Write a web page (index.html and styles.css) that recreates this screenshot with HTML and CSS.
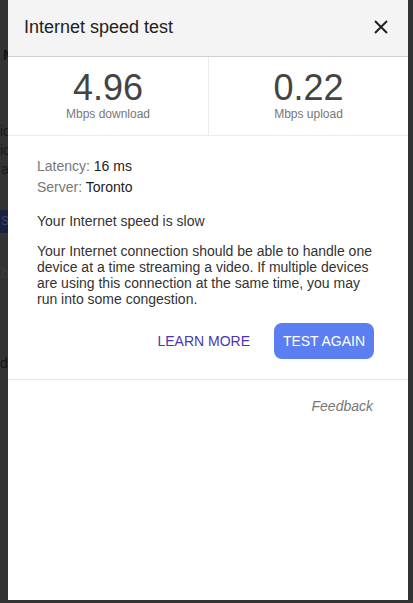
FILE: index.html
```html
<!DOCTYPE html>
<html lang="en">
<head>
<meta charset="utf-8">
<title>Internet speed test</title>
<link rel="stylesheet" href="styles.css">
</head>
<body>
<div class="page">
  <div class="pg-line pg-m">M</div>
  <div class="pg-line pg-ic1">ic</div>
  <div class="pg-line pg-ic2">ic</div>
  <div class="pg-line pg-a">a</div>
  <div class="pg-btn">S</div>
  <div class="pg-line pg-b">b</div>
  <div class="pg-line pg-d">d</div>
</div>

<div class="dialog" role="dialog" aria-label="Internet speed test">
  <header class="dlg-head">
    <h1 class="dlg-title">Internet speed test</h1>
    <button class="close" aria-label="Close">
      <svg width="14" height="14" viewBox="0 0 14 14"><path d="M1 1L13 13M13 1L1 13" stroke="#222" stroke-width="2" fill="none"/></svg>
    </button>
  </header>

  <section class="stats">
    <div class="stat">
      <div class="stat-num">4.96</div>
      <div class="stat-label">Mbps download</div>
    </div>
    <div class="stat">
      <div class="stat-num">0.22</div>
      <div class="stat-label">Mbps upload</div>
    </div>
  </section>

  <section class="details">
    <div class="meta">
      <div><span class="meta-k">Latency:</span> <span class="meta-v">16 ms</span></div>
      <div><span class="meta-k">Server:</span> <span class="meta-v">Toronto</span></div>
    </div>
    <div class="verdict">Your Internet speed is slow</div>
    <p class="desc">Your Internet connection should be able to handle one device at a time streaming a video. If multiple devices are using this connection at the same time, you may run into some congestion.</p>
    <div class="actions">
      <a class="learn" href="#">LEARN MORE</a>
      <button class="again">TEST AGAIN</button>
    </div>
  </section>

  <footer class="dlg-foot">
    <span class="feedback">Feedback</span>
  </footer>
</div>
</body>
</html>
```

FILE: styles.css
```css
* { box-sizing: border-box; }
html, body {
  margin: 0;
  padding: 0;
  height: 100%;
}
body {
  background: #333333;
  font-family: "Liberation Sans", Arial, sans-serif;
  overflow: hidden;
  position: relative;
}

/* background page peeking through at the left edge */
.page {
  display: flex;
  flex-direction: column;
  padding-top: 48px;
  color: #111;
  font-size: 14px;
}
.pg-line {
  line-height: 14px;
}
.pg-m { font-size: 15px; font-weight: bold; margin-left: 3px; color: #161616; }
.pg-ic1 { margin-top: 62px; color: #1a1a1a; }
.pg-ic2 { margin-top: 5px; color: #1a1a1a; }
.pg-a { margin-top: 5px; margin-left: 1px; color: #1a1a1a; }
.pg-btn {
  margin-top: 34px;
  width: 8px;
  height: 23px;
  background: #19213f;
  color: #3a4670;
  font-size: 12px;
  line-height: 23px;
  padding-left: 1px;
  overflow: hidden;
}
.pg-b { margin-top: 33px; font-style: italic; color: #3d3d3d; margin-left: 1px; }
.pg-d { margin-top: 76px; color: #151515; }

/* dialog */
.dialog {
  position: absolute;
  left: 8px;
  top: 0;
  width: 400px;
  height: 600px;
  background: #fff;
  display: flex;
  flex-direction: column;
}
.dlg-head {
  height: 57px;
  background: #f4f4f4;
  border-bottom: 1px solid #cfcfcf;
  display: flex;
  align-items: center;
  justify-content: space-between;
  padding: 0 20px 2px 16px;
}
.dlg-title {
  margin: 0;
  font-size: 18px;
  font-weight: normal;
  color: #222;
}
.close {
  border: 0;
  background: none;
  padding: 0;
  width: 14px;
  height: 14px;
  display: flex;
  cursor: pointer;
}

.stats {
  display: grid;
  grid-template-columns: 200px 200px;
  border-bottom: 1px solid #ececec;
}
.stat {
  text-align: center;
  padding: 13px 0 14px;
}
.stat + .stat { border-left: 1px solid #ececec; }
.stat-num {
  font-size: 36px;
  line-height: 36px;
  color: #444;
}
.stat-label {
  margin-top: 2px;
  font-size: 12px;
  line-height: 13px;
  color: #777;
}

.details {
  padding: 20px 34px 20px 29px;
  border-bottom: 1px solid #e8e8e8;
  font-size: 14px;
  color: #333;
}
.meta { line-height: 20.5px; }
.meta-k { color: #777; }
.meta-v { color: #222; }
.verdict {
  margin-top: 14px;
  line-height: 20px;
  color: #333;
}
.desc {
  margin: 12px 0 0;
  line-height: 16px;
  color: #333;
}
.actions {
  margin-top: 16px;
  display: flex;
  justify-content: flex-end;
  align-items: center;
  gap: 24px;
}
.learn {
  color: #4a36b5;
  text-decoration: none;
  font-size: 14px;
}
.again {
  border: 0;
  background: #5b7ef0;
  color: #fff;
  font-family: inherit;
  font-size: 14px;
  height: 36px;
  width: 100px;
  border-radius: 8px;
  padding: 0;
  cursor: pointer;
}

.dlg-foot {
  display: flex;
  justify-content: flex-end;
  padding: 16px 35px 0 29px;
  line-height: 20px;
}
.feedback {
  font-style: italic;
  font-size: 14px;
  color: #777;
}
```
